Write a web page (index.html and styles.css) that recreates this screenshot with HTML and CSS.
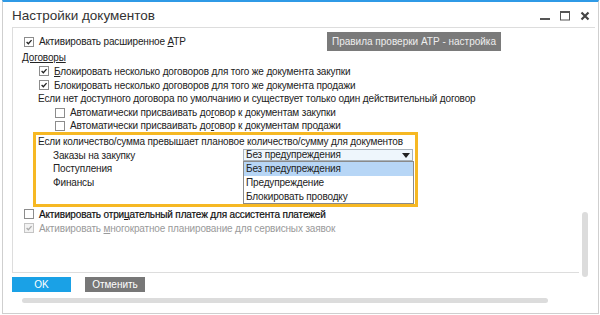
FILE: index.html
```html
<!DOCTYPE html>
<html lang="ru">
<head>
  <meta charset="UTF-8">
  <title>Настройки документов</title>
  <link rel="stylesheet" href="styles.css">
</head>
<body>
  <div class="window">
    <div class="titlebar">
      <h1 class="title">Настройки документов</h1>
      <div class="controls">
        <svg class="ctl" width="12" height="12" viewBox="0 0 12 12"><rect x="1" y="8" width="10" height="2" fill="#555"/></svg>
        <svg class="ctl" width="12" height="12" viewBox="0 0 12 12"><rect x="1.5" y="1.5" width="9" height="8.5" fill="none" stroke="#555" stroke-width="1"/><rect x="1" y="1" width="10" height="2" fill="#555"/></svg>
        <svg class="ctl" width="12" height="12" viewBox="0 0 12 12"><path d="M2.5 2.5 L9.5 9.5 M9.5 2.5 L2.5 9.5" stroke="#444" stroke-width="2.2"/></svg>
      </div>
    </div>

    <div class="main">
      <div class="panel">
        <div class="row row-top">
          <div class="check">
            <span class="box"><svg viewBox="0 0 10 10"><path d="M2 5 L4.2 7.2 L8.2 2.6" fill="none" stroke="#222" stroke-width="1.6"/></svg></span>
            <span>Активировать расширенное <u>А</u>ТР</span>
          </div>
          <button class="btn-rules">Правила проверки АТР - настройка</button>
        </div>

        <div class="section-title">Договоры</div>
        <div class="check lvl1">
          <span class="box"><svg viewBox="0 0 10 10"><path d="M2 5 L4.2 7.2 L8.2 2.6" fill="none" stroke="#222" stroke-width="1.6"/></svg></span>
          <span><u>Б</u>локировать несколько договоров для того же документа закупки</span>
        </div>
        <div class="check lvl1">
          <span class="box"><svg viewBox="0 0 10 10"><path d="M2 5 L4.2 7.2 L8.2 2.6" fill="none" stroke="#222" stroke-width="1.6"/></svg></span>
          <span>Блоки<u>р</u>овать несколько договоров для того же документа продажи</span>
        </div>
        <div class="line lvl1-text">Если нет доступного договора по умолчанию и существует только один действительный договор</div>
        <div class="check lvl2">
          <span class="box"></span>
          <span>Автоматически присваивать до<u>г</u>овор к документам закупки</span>
        </div>
        <div class="check lvl2">
          <span class="box"></span>
          <span>Автоматически присваивать до<u>г</u>овор к документам продажи</span>
        </div>

        <div class="highlight">
          <div class="line">Если количество/сумма превышает плановое количество/сумму для документов</div>
          <div class="limits">
            <div class="limit-label">Заказы на закупку</div>
            <div class="select-wrap">
              <div class="select">
                <span>Без предупреждения</span>
                <span class="arrow"></span>
              </div>
              <ul class="options">
                <li class="selected">Без предупреждения</li>
                <li>Предупреждение</li>
                <li>Блокировать проводку</li>
              </ul>
            </div>
            <div class="limit-label">Поступления</div>
            <div></div>
            <div class="limit-label">Финансы</div>
            <div></div>
          </div>
        </div>

        <div class="check">
          <span class="box"></span>
          <span class="strong">Активировать отри<u>ц</u>ательный платеж для ассистента платежей</span>
        </div>
        <div class="check disabled">
          <span class="box"><svg viewBox="0 0 10 10"><path d="M2 5 L4.2 7.2 L8.2 2.6" fill="none" stroke="#aaa" stroke-width="1.6"/></svg></span>
          <span>Активировать <u>м</u>ногократное планирование для сервисных заявок</span>
        </div>
      </div>
      <div class="vscroll"></div>
    </div>

    <div class="footer">
      <button class="btn btn-ok">OK</button>
      <button class="btn btn-cancel">Отменить</button>
    </div>
    <div class="hscroll"></div>
  </div>
</body>
</html>
```

FILE: styles.css
```css
* {
  margin: 0;
  padding: 0;
  box-sizing: border-box;
}

body {
  font-family: 'Liberation Sans', Arial, sans-serif;
  font-size: 10px;
  letter-spacing: -0.15px;
  color: #222;
  background: #fff;
}

.window {
  width: 597px;
  height: 314px;
  margin-left: 2px;
  border: 1px solid #cfcfcf;
  border-top: 2px solid #2f9ae6;
}

/* title bar */
.titlebar {
  display: flex;
  align-items: flex-start;
  height: 26px;
  margin: 0 3px 0 9px;
  border-bottom: 1px solid #ddd;
}

.title {
  font-size: 13.5px;
  font-weight: 400;
  letter-spacing: 0;
  color: #333;
  line-height: 22px;
  padding-top: 3px;
}

.controls {
  margin-left: auto;
  display: flex;
  gap: 8px;
  padding-top: 8px;
  padding-right: 4px;
}

.ctl {
  display: block;
}

/* main area */
.main {
  display: flex;
  align-items: flex-end;
}

.panel {
  width: 567px;
  height: 245px;
  margin-left: 9px;
  margin-bottom: 4px;
  padding-left: 9px;
  border-left: 1px solid #ddd;
  border-bottom: 1px solid #ddd;
}

.vscroll {
  width: 6px;
  height: 65px;
  margin-left: 3px;
  background: #dcdcdc;
  border-radius: 3px;
}

.row-top {
  display: flex;
  align-items: center;
  height: 19px;
  margin-top: 4px;
  padding-right: 78px;
}

.btn-rules {
  margin-left: auto;
  width: 174px;
  height: 19px;
  border: none;
  background: #7a7a7a;
  color: #eee;
  font-family: inherit;
  font-size: 10px;
  letter-spacing: 0;
}

.section-title {
  height: 13px;
  line-height: 13px;
  text-decoration: underline;
}

.check {
  display: flex;
  align-items: center;
  height: 14px;
  padding-left: 2px;
  white-space: nowrap;
}

.line {
  height: 14px;
  line-height: 14px;
  white-space: nowrap;
}

.lvl1 {
  padding-left: 17px;
}

.lvl1-text {
  padding-left: 16px;
}

.lvl2 {
  padding-left: 33px;
  height: 13px;
}

.box {
  flex: none;
  width: 10px;
  height: 10px;
  margin-right: 5px;
  border: 1px solid #8c8c8c;
  background: #fff;
}

.box svg {
  display: block;
  width: 8px;
  height: 8px;
}

.disabled {
  color: #9a9a9a;
}

.disabled .box {
  border-color: #c4c4c4;
  background: #f2f2f2;
}

.strong {
  color: #111;
  -webkit-text-stroke: 0.2px #111;
}

/* highlighted block */
.highlight {
  width: 385px;
  height: 75px;
  margin-left: 11px;
  padding-left: 2px;
  border: 3px solid #f6b823;
}

.limits {
  display: grid;
  grid-template-columns: 205px 170px;
  grid-template-rows: 13px 14px 14px;
}

.limit-label {
  padding-left: 15px;
  line-height: 13px;
}

.select-wrap {
  position: relative;
}

.select {
  display: flex;
  align-items: center;
  height: 12px;
  padding-left: 2px;
  border: 1px solid #a9b3bb;
  background: #eef6fc;
  line-height: 10px;
}

.arrow {
  margin-left: auto;
  margin-right: 2px;
  border-left: 4px solid transparent;
  border-right: 4px solid transparent;
  border-top: 5px solid #222;
}

.options {
  position: absolute;
  top: 12px;
  left: 0;
  width: 171px;
  list-style: none;
  background: #fff;
  border: 1px solid #8a8a8a;
  z-index: 2;
}

.options li {
  height: 14px;
  line-height: 14px;
  padding-left: 2px;
}

.options li:last-child {
  height: 13px;
}

.options .selected {
  background: #b7d6f6;
}

/* footer */
.footer {
  display: flex;
  gap: 14px;
  padding-left: 9px;
}

.btn {
  height: 15px;
  border: none;
  color: #fff;
  font-family: inherit;
  font-size: 10px;
  letter-spacing: 0;
}

.btn-ok {
  width: 59px;
  background: #1aa1e6;
}

.btn-cancel {
  width: 60px;
  background: #777;
}

.hscroll {
  width: 526px;
  height: 5px;
  margin: 6px 0 0 19px;
  background: #dcdcdc;
  border-radius: 3px;
}
```
